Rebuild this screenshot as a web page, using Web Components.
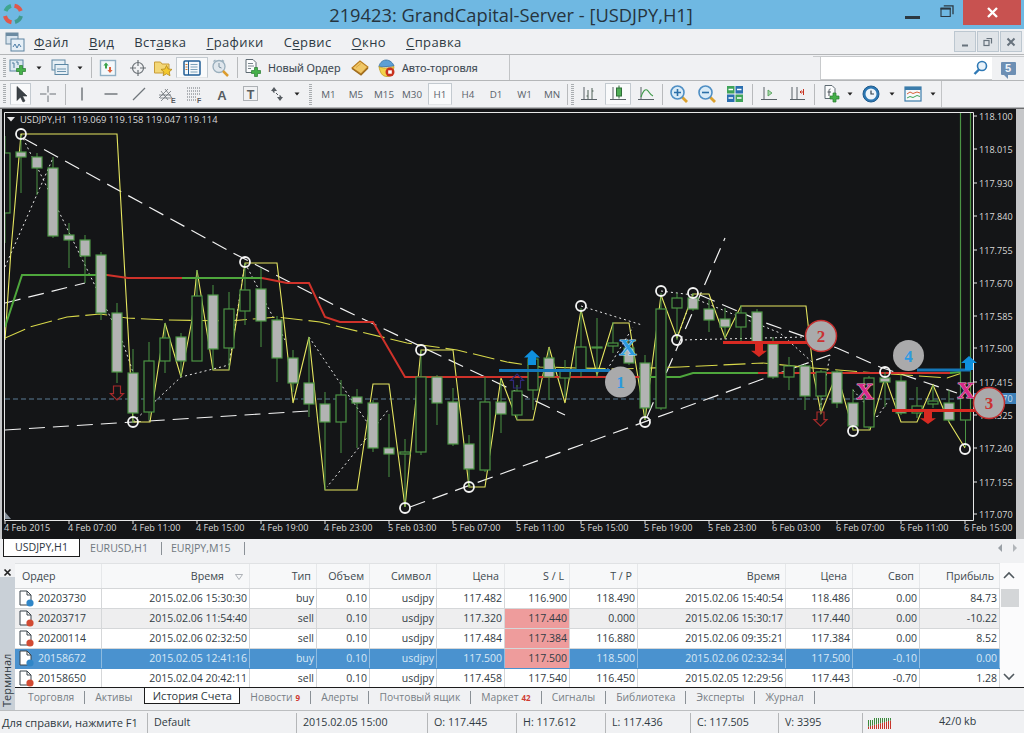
<!DOCTYPE html>
<html lang="ru">
<head>
<meta charset="utf-8">
<title>219423: GrandCapital-Server - [USDJPY,H1]</title>
<style>
  html, body { margin: 0; padding: 0; height: 733px; overflow: hidden; background: #f0f1f3; }
  body { font-family: "Open Sans", "Liberation Sans", sans-serif; color: #333; display: flex; flex-direction: column; }
</style>
</head>
<body>
<mt-titlebar>219423: GrandCapital-Server - [USDJPY,H1]</mt-titlebar>
<mt-menubar></mt-menubar>

<mt-toolbar height="26" end="510" id="tb1">
  <mt-tool w="20" icon="newchart"></mt-tool>
  <mt-tool w="22" icon="drop"></mt-tool>
  <mt-tool w="20" icon="profiles"></mt-tool>
  <mt-tool w="20" icon="drop"></mt-tool>
  <mt-tool w="2" icon="sep"></mt-tool>
  <mt-tool w="32" icon="market"></mt-tool>
  <mt-tool w="28" icon="target"></mt-tool>
  <mt-tool w="22" icon="folderstar"></mt-tool>
  <mt-tool w="36" icon="navigator" active></mt-tool>
  <mt-tool w="20" icon="magclock"></mt-tool>
  <mt-tool w="14" icon="sep"></mt-tool>
  <mt-tool w="18" icon="neworder"></mt-tool>
  <mt-tool w="86" label="Новый Ордер" strong pad="6"></mt-tool>
  <mt-tool w="24" icon="book"></mt-tool>
  <mt-tool w="28" icon="auto"></mt-tool>
  <mt-tool w="84" label="Авто-торговля" strong pad="2"></mt-tool>
</mt-toolbar>

<mt-toolbar height="27" end="942" id="tb2">
  <mt-tool w="25" icon="cursor" active></mt-tool>
  <mt-tool w="30" icon="cross"></mt-tool>
  <mt-tool w="4" icon="sep"></mt-tool>
  <mt-tool w="30" icon="vline"></mt-tool>
  <mt-tool w="28" icon="hline"></mt-tool>
  <mt-tool w="28" icon="diag"></mt-tool>
  <mt-tool w="28" icon="channel"></mt-tool>
  <mt-tool w="26" icon="fib"></mt-tool>
  <mt-tool w="30" icon="letter"></mt-tool>
  <mt-tool w="28" icon="textbox"></mt-tool>
  <mt-tool w="24" icon="arrows"></mt-tool>
  <mt-tool w="16" icon="drop"></mt-tool>
  <mt-tool w="10" icon="grip"></mt-tool>
  <mt-tool w="27" label="M1"></mt-tool>
  <mt-tool w="28" label="M5"></mt-tool>
  <mt-tool w="28" label="M15"></mt-tool>
  <mt-tool w="28" label="M30"></mt-tool>
  <mt-tool w="28" label="H1" active></mt-tool>
  <mt-tool w="28" label="H4"></mt-tool>
  <mt-tool w="28" label="D1"></mt-tool>
  <mt-tool w="29" label="W1"></mt-tool>
  <mt-tool w="26" label="MN"></mt-tool>
  <mt-tool w="4" icon="sep"></mt-tool>
  <mt-tool w="6" icon="grip"></mt-tool>
  <mt-tool w="28" icon="bars"></mt-tool>
  <mt-tool w="30" icon="candle" active></mt-tool>
  <mt-tool w="26" icon="curve"></mt-tool>
  <mt-tool w="6" icon="sep"></mt-tool>
  <mt-tool w="28" icon="zoomin"></mt-tool>
  <mt-tool w="28" icon="zoomout"></mt-tool>
  <mt-tool w="28" icon="tile"></mt-tool>
  <mt-tool w="6" icon="sep"></mt-tool>
  <mt-tool w="28" icon="shift"></mt-tool>
  <mt-tool w="28" icon="autoscroll"></mt-tool>
  <mt-tool w="6" icon="sep"></mt-tool>
  <mt-tool w="29" icon="indicator"></mt-tool>
  <mt-tool w="8" icon="drop"></mt-tool>
  <mt-tool w="34" icon="clock"></mt-tool>
  <mt-tool w="8" icon="drop"></mt-tool>
  <mt-tool w="33" icon="template"></mt-tool>
  <mt-tool w="8" icon="drop"></mt-tool>
</mt-toolbar>

<mt-chart></mt-chart>
<mt-charttabs></mt-charttabs>
<mt-terminal></mt-terminal>
<mt-statusbar></mt-statusbar>

<script>
// toolbar icons, all drawn on a 20x20 box
const dropIcon = '<path d="M7.500 8.500h5l-2.500 3z" fill="#222"/>';
const plus = (x, y) => `<path transform="translate(${x} ${y})" d="M3 0h3v3h3v3H6v3H3V6H0V3h3z" fill="#46b04a" stroke="#2a7c30" stroke-width=".7"/>`;
const axes = '<path d="M5 3v13M2 15.500h16" fill="none" stroke="#5a6268"/>';
const icons = {
  drop: dropIcon,
  newchart: `<rect x="2" y="2" width="13" height="11" fill="#dce8f0" stroke="#5c87a4"/><path d="M4 5h2v5M8 4h2v3" fill="none" stroke="#4d7c9c"/>${plus(8.500, 7.500)}`,
  profiles: `<rect x="2" y="2" width="13" height="10" fill="#e6eff5" stroke="#5c87a4"/><rect x="5" y="6.500" width="13" height="10" fill="#e6eff5" stroke="#5c87a4"/><path d="M7 11h9M7 13.500h9" stroke="#6c94ae"/>`,
  market: `<rect x="2.500" y="2.500" width="15" height="15" fill="#f4f8fb" stroke="#8fafc4" stroke-width="1.400"/><path d="M8 4.500l2.600 3H9v3H7v-3H5.400z" fill="#3aa34a"/><path d="M12 15l-2.600-3H11V9h2v3h1.600z" fill="#e0603a"/>`,
  target: `<circle cx="10" cy="10" r="5.500" fill="none" stroke="#6c7277" stroke-width="1.200"/><path d="M10 2v6M10 12v6M2 10h6M12 10h6" stroke="#6c7277" stroke-width="1.200"/>`,
  folderstar: `<path d="M1.500 4h6l1.500 2h7v9h-14.500z" fill="#f3d777" stroke="#c89c38"/><path d="M13.500 7.500l1.700 3.500 3.800.4-2.800 2.500.8 3.800-3.500-1.900-3.400 1.900.8-3.800-2.900-2.500 3.900-.4z" fill="#f4c92e" stroke="#b58a1c" stroke-width=".8"/>`,
  navigator: `<rect x="2" y="3" width="16" height="14" rx="1" fill="#f4f8fb" stroke="#205d96" stroke-width="1.500"/><path d="M6.500 3v14" stroke="#205d96"/><path d="M8.500 6.500h7M8.500 9h7M8.500 11.500h7M8.500 14h7" stroke="#7ea2ba"/><path d="M3.500 6.500h2M3.500 9h2M3.500 11.500h2" stroke="#d0762a"/>`,
  magclock: `<circle cx="9" cy="8.500" r="6" fill="#dfe6ec" stroke="#9aafbd" stroke-width="1.300"/><path d="M9 5v4l2.500 1" fill="none" stroke="#7a909f"/><path d="M3.500 3.500l2-1.500M14 3.500l-2-1.500" stroke="#9aafbd" stroke-width="1.300"/><path d="M13 13l5 5" stroke="#dc9c2e" stroke-width="2.500"/>`,
  neworder: `<path d="M3 1.500h7l3 3v10h-10z" fill="#fbfcfd" stroke="#5e6a72"/><path d="M5 5.500h5M5 8h6M5 10.500h3" stroke="#7a868e"/>${plus(8.500, 9.500)}`,
  book: `<path d="M10 3l8 6-7 7-9-6z" fill="#f0c766" stroke="#b97d20" stroke-width="1.100"/><path d="M2 10.500l9 6.500 7-7" fill="none" stroke="#9c6a1e" stroke-width="1.200"/><path d="M6 9.500l5-4" stroke="#d9a744"/>`,
  auto: `<path d="M3 9c0-3 3-7 7-7s7 3 8 6z" fill="#5d9fd4" stroke="#356f9e" stroke-width=".8"/><path d="M3 8.500c3 2 9 2 15 0l-1 6c-1 3-3 4-6 4-5 0-7-4-8-10z" fill="#f2d24a" stroke="#c29a20" stroke-width=".8"/><circle cx="14" cy="14" r="4.500" fill="#c8321f"/><rect x="12.200" y="12.300" width="3.600" height="3.400" fill="#fff"/>`,
  cursor: `<path d="M6 2.500v14l3.500-3.500 2.500 5 2-1-2.500-5H16z" fill="#3c4247" stroke="#2a2f33" stroke-width=".6"/>`,
  cross: `<path d="M10 2v6.500M10 11.500V18M2 10h6.500M11.500 10H18" stroke="#6b7176" stroke-width="1"/>`,
  vline: `<path d="M10 3.500v13" stroke="#555c61" stroke-width="1.200"/>`,
  hline: `<path d="M3.500 10h13" stroke="#555c61" stroke-width="1.200"/>`,
  diag: `<path d="M4 16L16 4" stroke="#70767b" stroke-width="1.200"/>`,
  channel: `<path d="M2 14l9-9M4 17l10-10M4 7l7 9M8 5l7 9M2 11h12M3 14h11" stroke="#6b7176" stroke-width=".8" fill="none"/><text x="14" y="18.500" font-size="7" font-weight="700" fill="#55595d" font-family="Liberation Sans">E</text>`,
  fib: `<path d="M3 4h13M3 7h13M3 10h13M3 13h9M3 16h9" stroke="#6b7176" stroke-width="1" stroke-dasharray="1 1"/><text x="13" y="18.500" font-size="7" font-weight="700" fill="#55595d" font-family="Liberation Sans">F</text>`,
  letter: `<text x="10" y="15.500" text-anchor="middle" font-size="13" font-weight="700" fill="#565c61" font-family="Liberation Sans">A</text>`,
  textbox: `<rect x="2.500" y="2.500" width="14" height="14" fill="none" stroke="#6b7176" stroke-dasharray="1 1"/><text x="9.500" y="14.500" text-anchor="middle" font-size="12.500" font-weight="700" fill="#565c61" font-family="Liberation Sans">T</text>`,
  arrows: `<path d="M4 7l3-4 3 4zM10 13l3 4 3-4z" fill="#565c61"/><path d="M6 7l1.500 1.500M12.500 11.500L14 13" stroke="#565c61" stroke-width="1.400"/><path d="M9 9l2 2" stroke="#565c61" stroke-width="1"/>`,
  bars: `${axes}<path d="M9 6v9M7.500 12H9M13 4v11M13 7h1.500" stroke="#4f6056" fill="none"/>`,
  candle: `${axes}<path d="M11 1.500v13" stroke="#2f6d39"/><rect x="8.500" y="4" width="5" height="8" fill="#4fae55" stroke="#2f6d39"/>`,
  curve: `${axes}<path d="M5 13c2-6 4-8 6-7s3 5 6 6" fill="none" stroke="#3f9a4a" stroke-width="1.200"/>`,
  zoomin: `<path d="M13 13l5 5" stroke="#dca22e" stroke-width="2.800"/><circle cx="8.500" cy="8.500" r="6.500" fill="#d9ebf7" stroke="#4f8fc4" stroke-width="1.600"/><path d="M5 8.500h7M8.500 5v7" stroke="#2b6fa8" stroke-width="1.600"/>`,
  zoomout: `<path d="M13 13l5 5" stroke="#dca22e" stroke-width="2.800"/><circle cx="8.500" cy="8.500" r="6.500" fill="#d9ebf7" stroke="#4f8fc4" stroke-width="1.600"/><path d="M5 8.500h7" stroke="#2b6fa8" stroke-width="1.600"/>`,
  tile: `<rect x="2" y="2" width="7.500" height="7.500" fill="#3fa45a"/><rect x="10.500" y="2" width="7.500" height="7.500" fill="#2a6fb0"/><rect x="2" y="10.500" width="7.500" height="7.500" fill="#2a6fb0"/><rect x="10.500" y="10.500" width="7.500" height="7.500" fill="#3fa45a"/><path d="M3.500 5.500h4.500M12 5.500h4.500M3.500 14h4.500M12 14h4.500" stroke="#fff" stroke-width="1.600"/>`,
  shift: `${axes}<path d="M9 6v6l4-3z" fill="#a6d9a8" stroke="#4c9a52" stroke-width=".8"/>`,
  autoscroll: `<path d="M3 15.500h15M5 3v13M10 3v13" fill="none" stroke="#5a6268"/><path d="M16.500 5v6M16 8h-3M14.500 6.500L13 8l1.500 1.500" fill="none" stroke="#c8321f"/>`,
  indicator: `<path d="M3 1.500h7l3 3v10h-10z" fill="#fbfcfd" stroke="#5e6a72"/><path d="M8.500 5c-1.500 0-1.500 1-1.500 2v5M5.500 8h3.500" stroke="#4a5258" fill="none"/>${plus(8, 9)}`,
  clock: `<circle cx="10" cy="10" r="8" fill="#2c78b4" stroke="#1f5b8c"/><circle cx="10" cy="10" r="5.500" fill="#eef5fa"/><path d="M10 6.500V10h3" fill="none" stroke="#33424e" stroke-width="1.200"/>`,
  template: `<rect x="2" y="3" width="16" height="14" fill="#f6f9fb" stroke="#3b7cab" stroke-width="1.200"/><rect x="2" y="3" width="16" height="3" fill="#3b7cab"/><path d="M4 10l3-2 3 1.500L14 8l3 1" fill="none" stroke="#d9623a"/><path d="M4 14l3-1.500 3 1 4-2 3 1" fill="none" stroke="#3fa45a"/>`,
};

class MtTitlebar extends HTMLElement {
  constructor() {
    super();
    this.attachShadow({ mode: "open" });
    this.shadowRoot.innerHTML = `
      <style>
        :host { display: flex; flex: none; height: 29px; background: #6fb8e2; position: relative; color: #26343e; }
        .logo { margin: 3px 0 0 2px; width: 22px; height: 22px; }
        .title { position: absolute; left: 0; right: 2px; top: 1px; text-align: center; font-size: 18.300px; line-height: 28px; white-space: nowrap; }
        .ctrls { margin-left: auto; display: flex; }
        .min { width: 15px; height: 3px; background: #2c3942; margin: 15.500px 20px 0 0; }
        .restore { width: 14px; height: 12px; margin: 5px 9px 0 0; }
        .close { width: 58px; height: 25px; margin-right: 3px; background: #c85250; display: flex; align-items: center; justify-content: center; }
      </style>
      <svg class="logo" viewBox="0 0 22 22" fill="none" stroke-width="4">
        <path d="M3.500 8A8.500 8.500 0 0 1 9 2.800" stroke="#3fa68e"/>
        <path d="M12.500 2.700A8.500 8.500 0 0 1 18.800 8" stroke="#e0584c"/>
        <path d="M19 13a8.500 8.500 0 0 1-6 6" stroke="#3f9a8e"/>
        <path d="M9.500 19.300A8.500 8.500 0 0 1 3 13" stroke="#e0584c"/>
      </svg>
      <div class="title"><slot></slot></div>
      <div class="ctrls">
        <div class="min"></div>
        <svg class="restore" viewBox="0 0 14 13" fill="none" stroke="#2c3942"><rect x="0.500" y="3.500" width="10" height="9" stroke-width="1.200"/><path d="M0 4h11" stroke-width="2"/><path d="M3.500 1h10v9" stroke-width="1.400"/></svg>
        <div class="close"><svg width="11" height="11" viewBox="0 0 11 11"><path d="M1 1l9 9M10 1l-9 9" stroke="#fff" stroke-width="2.400"/></svg></div>
      </div>
    `;
  }
}
customElements.define("mt-titlebar", MtTitlebar);

class MtMenubar extends HTMLElement {
  constructor() {
    super();
    this.attachShadow({ mode: "open" });
    this.shadowRoot.innerHTML = `
      <style>
        :host { display: flex; flex: none; height: 25px; align-items: center; background: #f0f1f3; border-bottom: 1px solid #b4b6b8; font-size: 13px; letter-spacing: .4px; color: #2e3a44; position: relative; }
        .ico { margin: 0 9px 0 5px; width: 20px; height: 20px; }
        nav { display: flex; gap: 20px; }
        u { text-decoration-thickness: 1px; text-underline-offset: 2px; }
        .mdi { position: absolute; right: 2px; top: 2px; display: flex; gap: 1px; }
        .mdi b { width: 22px; height: 21px; box-sizing: border-box; background: #e0e4e8; border: 1px solid #bcc7d0; display: flex; align-items: center; justify-content: center; }
      </style>
      <svg class="ico" viewBox="0 0 20 20"><rect x="1" y="1" width="12" height="11" fill="#d8e4ee" stroke="#6c8ba2"/><rect x="1" y="1" width="12" height="3" fill="#6c8ba2"/><rect x="6" y="7" width="13" height="12" fill="#e6eff6" stroke="#5a82a0"/><path d="M8 15l2-3 2 4 2-4 2 3" fill="none" stroke="#4d7ea8"/></svg>
      <nav>
        <span><u>Ф</u>айл</span><span><u>В</u>ид</span><span>Вст<u>а</u>вка</span><span><u>Г</u>рафики</span><span>С<u>е</u>рвис</span><span><u>О</u>кно</span><span><u>С</u>правка</span>
      </nav>
      <div class="mdi">
        <b><svg width="10" height="10" viewBox="0 0 10 10"><path d="M2 8.500h6" stroke="#67727c" stroke-width="2"/></svg></b>
        <b><svg width="10" height="10" viewBox="0 0 10 10" fill="none" stroke="#67727c" stroke-width="1.200"><rect x="1" y="3.500" width="5" height="5"/><path d="M3.500 1.500h5v5"/></svg></b>
        <b><svg width="10" height="10" viewBox="0 0 10 10"><path d="M1.500 1.500l7 7M8.500 1.500l-7 7" stroke="#67727c" stroke-width="2"/></svg></b>
      </div>
    `;
  }
}
customElements.define("mt-menubar", MtMenubar);

class MtToolbar extends HTMLElement {
  constructor() {
    super();
    this.attachShadow({ mode: "open" });
    this.shadowRoot.innerHTML = `
      <style>
        :host { display: flex; flex: none; background: #f0f1f3; border-bottom: 1px solid #b4b6b8; position: relative; box-sizing: border-box; }
        .grip { width: 3px; margin: 3px 2px 3px 3px; background: repeating-linear-gradient(#a9adb0 0 1px, transparent 1px 2px); }
        .strip { display: flex; box-sizing: border-box; border-right: 1px solid #c2c4c6; }
        .search { position: absolute; right: 0; top: 1px; width: 211px; height: 24px; display: flex; box-sizing: border-box; border-top: 1px solid #c8cacc; }
        .search .field { flex: 1; margin-left: 7px; background: #fff; border-left: 1px solid #c8cacc; border-bottom: 1px solid #c8cacc; display: flex; align-items: center; justify-content: flex-end; padding-right: 3px; }
        .search .chat { width: 32px; display: flex; align-items: center; justify-content: center; }
        .chat span { font: 700 11px "Liberation Sans", sans-serif; color: #f2f6fa; width: 15px; height: 13px; line-height: 13px; text-align: center; background: #6d8fb4; border-radius: 1px; position: relative; }
        .chat span::after { content: ""; position: absolute; left: 3px; top: 13px; border: 2px solid #6d8fb4; border-bottom-color: transparent; border-left-color: transparent; }
      </style>
      <div class="grip"></div>
      <div class="strip"><slot></slot></div>
    `;
  }
  connectedCallback() {
    this.style.height = this.getAttribute("height") + "px";
    this.shadowRoot.querySelector(".strip").style.width = (this.getAttribute("end") - 8) + "px";
    if (this.id === "tb1") {
      const search = document.createElement("div");
      search.className = "search";
      search.innerHTML = `<div class="field"><svg width="18" height="18" viewBox="0 0 18 18"><circle cx="11" cy="7" r="4.500" fill="#e8f2fa" stroke="#2f79b5" stroke-width="1.600"/><path d="M8 10.500l-4.500 4.500" stroke="#2f79b5" stroke-width="2.400"/></svg></div><div class="chat"><span>5</span></div>`;
      this.shadowRoot.appendChild(search);
    }
  }
}
customElements.define("mt-toolbar", MtToolbar);

class MtTool extends HTMLElement {
  constructor() {
    super();
    this.attachShadow({ mode: "open" });
  }
  connectedCallback() {
    const icon = this.getAttribute("icon");
    const label = this.getAttribute("label");
    this.style.width = this.getAttribute("w") + "px";
    if (this.hasAttribute("pad")) this.style.paddingLeft = this.getAttribute("pad") + "px";
    let inner = "";
    if (icon === "sep") inner = '<i class="sep"></i>';
    else if (icon === "grip") inner = '<i class="grip"></i>';
    else if (icon) inner = `<svg width="20" height="20" viewBox="0 0 20 20">${icons[icon]}</svg>`;
    else inner = `<span>${label}</span>`;
    this.shadowRoot.innerHTML = `
      <style>
        :host { display: flex; flex: none; align-items: center; justify-content: center; box-sizing: border-box; overflow: visible; position: relative; font-size: 9.800px; color: #59626a; white-space: nowrap; }
        :host([strong]) { justify-content: flex-start; font-size: 10.800px; font-weight: 500; -webkit-text-stroke: .15px #3a4650; color: #3a4650; }
        :host([active])::before { content: ""; position: absolute; inset: 2px 2px 2px 2px; background: #f9fafb; border: 1px solid #c3cad0; border-bottom-color: #e4e6e8; z-index: 0; }
        svg, span { position: relative; z-index: 1; flex: none; }
        .sep { width: 1px; height: 21px; background: #b8babc; }
        .grip { width: 3px; height: 21px; background: repeating-linear-gradient(#a9adb0 0 1px, transparent 1px 2px); }
      </style>
      ${inner}
    `;
  }
}
customElements.define("mt-tool", MtTool);

// [x, body top, body bottom, wick top, wick bottom, filled]
const candles = [
  [5,153,213,136,243,0],[21,152,157,135,193,1],[37,157,168,153,195,1],[53,168,236,157,238,1],[69,235,240,223,268,1],
  [85,240,256,235,283,1],[101,255,313,252,320,1],[117,313,372,303,383,1],[133,373,413,349,423,1],[149,361,412,342,420,0],
  [165,338,361,323,373,0],[181,337,361,333,377,1],[197,296,361,270,361,0],[213,295,349,285,370,1],[229,309,348,292,370,0],
  [245,290,311,263,325,0],[261,289,321,268,347,1],[277,320,358,316,382,1],[293,358,383,350,392,1],[309,383,404,337,417,1],
  [325,404,422,392,490,1],[341,395,422,380,453,0],[357,397,403,389,448,1],[373,403,448,400,452,1],[389,448,454,414,477,1],
  [405,452,454,439,507,0],[421,377,452,350,455,0],[437,377,403,375,425,1],[453,402,444,388,446,1],[469,444,469,435,487,1],
  [485,402,470,377,472,0],[501,402,414,380,433,1],[517,391,415,385,420,0],[533,359,390,355,410,0],[549,358,377,348,400,1],
  [565,370,378,360,397,0],[581,347,370,308,377,0],[597,347,348,318,377,0],[613,343,346,322,353,0],[629,348,363,340,365,1],
  [645,363,408,355,420,1],[661,309,408,293,410,0],[677,298,308,293,340,0],[693,298,309,293,311,1],[709,309,320,300,332,1],
  [725,319,327,308,338,1],[741,313,327,305,342,0],[757,312,342,309,344,1],[773,344,377,337,379,1],[789,366,377,357,390,0],
  [805,366,396,364,410,1],[821,372,396,370,413,0],[837,372,403,370,408,1],[853,403,426,389,430,1],[869,378,427,376,429,0],
  [885,378,382,372,407,1],[901,381,413,375,415,1],[917,406,413,387,418,0],[933,401,404,385,408,0],[949,403,420,390,422,1],
  [965.500,100,420,420,447,0],
];

const zigzag = [[5,340],[11,250],[21,134],[117,134],[128,330],[133,422],[150,422],[165,323],[181,377],[192,320],[197,270],[213,370],[229,370],[245,263],[277,263],[283,313],[293,403],[309,337],[325,490],[357,490],[373,384],[389,384],[405,507],[421,350],[453,350],[469,487],[485,487],[501,378],[517,420],[533,420],[549,347],[565,403],[581,310],[597,375],[613,323],[629,323],[645,420],[661,295],[677,338],[693,294],[709,294],[725,338],[741,306],[806,306],[814,377],[821,413],[837,373],[853,430],[870,430],[885,377],[901,422],[917,422],[933,385],[949,422],[965,448]];
const slowMa = [[5,338],[30,327],[67,317],[100,314],[127,318],[167,320],[230,321],[277,317],[320,322],[340,327],[407,343],[457,350],[507,362],[540,367],[620,369],[680,367],[763,363],[813,368],[863,372],[947,378],[965,372]];

const sellLine = (pts) => pts.map((p, i) => (i ? "L" : "M") + p[0] + " " + p[1]).join("");
const marks = [[21,134],[245,262],[133,422],[421,350],[469,487],[405,508],[581,306],[645,422],[661,291],[677,340],[693,293],[853,431],[885,372],[965,449]];
const prices = [["118.100",116],["118.015",149],["117.930",183],["117.840",216],["117.755",250],["117.670",283],["117.585",316],["117.500",348],["117.415",382],["117.325",415],["117.240",448],["117.155",482],["117.070",514]];
const times = ["4 Feb 2015","4 Feb 07:00","4 Feb 11:00","4 Feb 15:00","4 Feb 19:00","4 Feb 23:00","5 Feb 03:00","5 Feb 07:00","5 Feb 11:00","5 Feb 15:00","5 Feb 19:00","5 Feb 23:00","6 Feb 03:00","6 Feb 07:00","6 Feb 11:00","6 Feb 15:00"];

const dashes = [
  [[23,138],[233,253],[340,308],[565,415]],
  [[700,295],[763,322],[837,348],[880,367],[957,393]],
  [[410,507],[680,409],[760,380],[830,355]],
  [[647,417],[725,238]],
  [[5,430],[117,423],[308,411]],
  [[5,303],[85,283]],
];
const dots = [
  [[21,134],[123,343],[133,372]],[[5,267],[53,158]],[[133,422],[181,377],[229,365],[245,263]],
  [[245,263],[285,340]],[[309,337],[340,383],[367,422]],[[365,440],[327,487]],[[365,440],[388,410]],
  [[581,306],[642,325]],[[607,370],[633,327]],[[661,291],[693,295]],[[677,338],[693,295]],
  [[680,340],[805,337]],[[693,298],[780,333],[812,362]],[[820,410],[830,355]],[[853,390],[877,417]],[[877,417],[887,403]],
];

const solidArrow = (x, top, bottom, up, color) => {
  const h = bottom - top;
  return up
    ? `<path d="M${x} ${top}l8 ${h * 0.5}h-4v${h * 0.5}h-8v${-h * 0.5}h-4z" fill="${color}"/>`
    : `<path d="M${x} ${bottom}l8 ${-h * 0.45}h-4v${-h * 0.55}h-8v${h * 0.55}h-4z" fill="${color}"/>`;
};
const hollowArrow = (x, top, bottom, up, color) => {
  const h = bottom - top;
  return up
    ? `<path d="M${x} ${top}l6.500 ${h * 0.45}h-3v${h * 0.55}h-7v${-h * 0.55}h-3z" fill="none" stroke="${color}" stroke-width="1.200"/>`
    : `<path d="M${x} ${bottom}l6.500 ${-h * 0.45}h-3v${-h * 0.55}h-7v${h * 0.55}h-3z" fill="none" stroke="${color}" stroke-width="1.200"/>`;
};
const badge = (x, y, n, color, ring) =>
  `<circle cx="${x}" cy="${y}" r="15.500" fill="#aaaaab" ${ring ? `stroke="${ring}" stroke-width="1.500"` : ""}/><text class="num" x="${x}" y="${y + 6}" style="fill:${color}">${n}</text>`;
const cross = (x, y, fill, halo) =>
  `<text class="xmark" x="${x}" y="${y}" style="fill:${fill};stroke:${halo}">X</text>`;

class MtChart extends HTMLElement {
  constructor() {
    super();
    this.attachShadow({ mode: "open" });
    const candleSvg = candles.map(([x, t, b, wt, wb, f]) =>
      `<path d="M${x} ${wt}V${wb}" stroke="#4b9444"/><rect x="${x - 5}" y="${t}" width="10" height="${b - t}" fill="${f ? "#b2b3b3" : "#141517"}" stroke="#4b9444" stroke-width="1.200"/>`
    ).join("");
    this.shadowRoot.innerHTML = `
      <style>
        :host { display: block; flex: none; height: 431px; background: #c6c7c9; border-top: 1px solid #6d6e70; box-sizing: border-box; padding-left: 2px; }
        svg { display: block; width: 1014px; height: 430px; background: #141517; }
        text { font-family: "Open Sans", "Liberation Sans", sans-serif; font-size: 9.100px; fill: #d8d8d8; }
        .legend { font-size: 9.400px; }
        .num { font-family: "Liberation Serif", serif; font-weight: 700; font-size: 17px; text-anchor: middle; }
        .xmark { font-family: "Liberation Serif", serif; font-weight: 700; font-size: 24px; text-anchor: middle; stroke-width: 1px; paint-order: stroke; }
      </style>
      <svg viewBox="2 109 1014 430">
        <defs><clipPath id="plot"><rect x="5" y="113" width="968" height="407"/></clipPath></defs>
        <path d="M4.500 112.500H973.500V520.500H4.500z" fill="none" stroke="#e8e8e8"/>
        <path d="M5 519v-7l6 7z" fill="#8b95a0"/>
        ${prices.map(([, y]) => `<path d="M974 ${y}h3" stroke="#e8e8e8"/>`).join("")}
        ${times.map((_, i) => `<path d="M${5 + i * 64} 521v3" stroke="#e8e8e8"/>`).join("")}
        <g clip-path="url(#plot)">
          <path d="M5 399H973" stroke="#5b7c96" stroke-dasharray="5 3" fill="none"/>
          ${dashes.map((d) => `<path d="${sellLine(d)}" fill="none" stroke="#f2f2f2" stroke-width="1.200" stroke-dasharray="16 8"/>`).join("")}
          ${dots.map((d) => `<path d="${sellLine(d)}" fill="none" stroke="#e8e8e8" stroke-dasharray="2 3"/>`).join("")}
          <path d="${sellLine(slowMa)}" fill="none" stroke="#d8d84a" stroke-width="1.100" stroke-dasharray="22 6"/>
          <path d="${sellLine(zigzag)}" fill="none" stroke="#e6e660" stroke-width="1.100"/>
          <path d="${sellLine([[5,327],[22,275],[107,275]])}" fill="none" stroke="#4ea63c" stroke-width="2"/>
          <path d="${sellLine([[107,275],[128,278],[182,278]])}" fill="none" stroke="#cf322a" stroke-width="2"/>
          <path d="${sellLine([[182,278],[262,278]])}" fill="none" stroke="#4ea63c" stroke-width="2"/>
          <path d="${sellLine([[262,278],[287,283],[309,283],[325,317],[340,322],[373,322],[405,377],[640,377]])}" fill="none" stroke="#cf322a" stroke-width="2"/>
          <path d="${sellLine([[640,377],[680,377],[693,373],[758,373]])}" fill="none" stroke="#4ea63c" stroke-width="2"/>
          <path d="${sellLine([[758,373],[950,373]])}" fill="none" stroke="#cf322a" stroke-width="2"/>
          <path d="${sellLine([[950,373],[960,372]])}" fill="none" stroke="#4ea63c" stroke-width="2"/>
          ${candleSvg}
        </g>
        ${marks.map(([x, y]) => `<circle cx="${x}" cy="${y}" r="5" fill="none" stroke="#f4f4f4" stroke-width="1.800"/>`).join("")}
        ${hollowArrow(117, 386, 400, false, "#a52a2a")}
        ${hollowArrow(517, 374, 388, true, "#2e2878")}
        ${hollowArrow(820.500, 412, 426, false, "#a52a2a")}
        <path d="M499 370.500H610" stroke="#1477b8" stroke-width="3"/>
        ${solidArrow(532, 350, 365, true, "#0f90dd")}
        <path d="M723 342.500H807" stroke="#d82a22" stroke-width="3"/>
        ${solidArrow(759, 343, 357, false, "#d82a22")}
        <path d="M892 410.500H975" stroke="#d82a22" stroke-width="3"/>
        ${solidArrow(928, 411, 424, false, "#d82a22")}
        <path d="M917 370H971" stroke="#1477b8" stroke-width="3"/>
        ${solidArrow(969, 356, 370, true, "#0f90dd")}
        ${cross(628, 355, "#2b9be0", "#bfe0f2")}
        ${cross(865, 399, "#d8288a", "#e7b4cc")}
        ${cross(966, 398, "#d8288a", "#e7b4cc")}
        ${prices.map(([p, y]) => `<text x="979" y="${y + 3.500}">${p}</text>`).join("")}
        <rect x="974" y="393" width="42" height="11" fill="#3d80b8"/>
        <text x="979" y="402" style="fill:#c8dcec">117.370</text>
        ${times.map((t, i) => `<text x="${4 + i * 64}" y="531">${t}</text>`).join("")}
        <path d="M7 117h8l-4 4.500z" fill="#e8e8e8"/>
        <text class="legend" x="20" y="123" xml:space="preserve">USDJPY,H1  119.069 119.158 119.047 119.114</text>
        ${badge(620.500, 382, 1, "#2c9ae0")}
        ${badge(821, 336, 2, "#c93232", "#c62f2f")}
        ${badge(989, 403, 3, "#c93232", "#c62f2f")}
        ${badge(908.500, 355.500, 4, "#2c9ae0")}
      </svg>
    `;
  }
}
customElements.define("mt-chart", MtChart);

class MtCharttabs extends HTMLElement {
  constructor() {
    super();
    this.attachShadow({ mode: "open" });
    this.shadowRoot.innerHTML = `
      <style>
        :host { display: flex; flex: none; height: 20px; background: #f0f1f3; font-size: 10.600px; color: #6f7880; align-items: flex-start; position: relative; }
        .active { margin-left: 3px; width: 77px; height: 18px; box-sizing: border-box; background: #fff; border: 1px solid #1c1c1c; border-top: 0; color: #2c3640; text-align: center; line-height: 17px; }
        .tab { line-height: 18px; padding-left: 10px; }
        .sep { width: 1px; height: 13px; background: #8a9096; margin: 3px 0 0 13px; }
        .arrows { position: absolute; right: 7px; top: 5px; display: flex; gap: 11px; }
        .arrows i { width: 0; height: 0; border: 4px solid transparent; }
        .l { border-right-color: #9aa0a6 !important; border-left: 0 !important; }
        .r { border-left-color: #b2b6ba !important; border-right: 0 !important; }
      </style>
      <div class="active">USDJPY,H1</div>
      <div class="tab">EURUSD,H1</div><div class="sep"></div>
      <div class="tab" style="padding-left:9px">EURJPY,M15</div><div class="sep"></div>
      <div class="arrows"><i class="l"></i><i class="r"></i></div>
    `;
  }
}
customElements.define("mt-charttabs", MtCharttabs);

const orders = [
  ["buy","20203730","2015.02.06 15:30:30","buy","0.10","usdjpy","117.482","116.900","118.490","2015.02.06 15:40:54","118.486","0.00","84.73",""],
  ["sell","20203717","2015.02.06 11:54:40","sell","0.10","usdjpy","117.320","117.440","0.000","2015.02.06 15:30:17","117.440","0.00","-10.22","alt"],
  ["sell","20200114","2015.02.06 02:32:50","sell","0.10","usdjpy","117.484","117.384","116.880","2015.02.06 09:35:21","117.384","0.00","8.52",""],
  ["buy","20158672","2015.02.05 12:41:16","buy","0.10","usdjpy","117.500","117.500","118.500","2015.02.06 02:32:34","117.500","-0.10","0.00","sel"],
  ["sell","20158650","2015.02.04 20:42:11","sell","0.10","usdjpy","117.458","117.540","116.450","2015.02.05 12:29:56","117.443","-0.70","1.28",""],
];
const heads = ["Ордер","Время","Тип","Объем","Символ","Цена","S / L","T / P","Время","Цена","Своп","Прибыль"];

class MtOrderTable extends HTMLElement {
  constructor() {
    super();
    this.attachShadow({ mode: "open" });
    const docIcon = (kind) => `<svg width="17" height="17" viewBox="0 0 17 17"><path d="M2 1h7l4 4v10H2z" fill="#fff" stroke="#38424a"/><path d="M9 1v4h4" fill="none" stroke="#38424a"/><circle cx="12" cy="13" r="3.600" fill="${kind === "buy" ? "#2f86c8" : "#d24a32"}"/></svg>`;
    const rows = orders.map((o, r) => {
      const cells = o.slice(1, 13).map((v, i) => {
        const pink = i === 6 && r >= 1 && r <= 3 ? " pink" : "";
        if (i === 0) return `<div class="c first">${docIcon(o[0])}<span>${v}</span></div>`;
        return `<div class="c${pink}">${v}</div>`;
      }).join("");
      return `<div class="row ${o[13]}">${cells}</div>`;
    }).join("");
    this.shadowRoot.innerHTML = `
      <style>
        :host { display: block; font-size: 10.500px; color: #333d45; overflow: hidden; height: 124px; --cols: 87px 148px 67px 53px 67px 68px 65px 68px 148px 67px 67px 80px; }
        .row { display: grid; grid-template-columns: var(--cols); height: 20px; line-height: 19px; box-sizing: border-box; border-bottom: 1px solid #d5d7d9; background: #fff; }
        .head { height: 26px; line-height: 25px; background: #f7f8f9; color: #40494f; font-size: 10.700px; border-bottom: 1px solid #d5d7d9; border-top: 1px solid #e0e2e4; }
        .c { text-align: right; padding-right: 2px; border-right: 1px solid #d5d7d9; white-space: nowrap; overflow: hidden; box-sizing: border-box; }
        .head .c { padding-right: 5px; border-right-color: #e6e8ea; }
        .head .c:first-child { text-align: left; padding-left: 7px; }
        .first { display: flex; align-items: center; gap: 3px; text-align: left; padding-left: 3px; }
        .alt { background: #eeeeef; }
        .sel { background: #4a92cf; color: #d9e9f6; border-color: #4a92cf; }
        .sel .c { border-right-color: #8dbbe0; }
        .pink { background: #ee9c9c; color: #333d45; }
        .sort { display: inline-block; width: 9px; margin-left: 10px; margin-right: 1px; color: #8b9197; }
      </style>
      <div class="row head">${heads.map((h, i) => `<div class="c">${h}${i === 1 ? '<span class="sort"><svg width="8" height="6" viewBox="0 0 8 6"><path d="M.5.500h7L4 5.500z" fill="none" stroke="#9aa0a6" stroke-width=".8"/></svg></span>' : ""}</div>`).join("")}</div>
      ${rows}
    `;
  }
}
customElements.define("mt-order-table", MtOrderTable);

class MtTerminal extends HTMLElement {
  constructor() {
    super();
    this.attachShadow({ mode: "open" });
    this.shadowRoot.innerHTML = `
      <style>
        :host { display: grid; flex: none; height: 151px; grid-template-columns: 15px 1fr 24px; grid-template-rows: 4px 124px 23px; background: #f0f1f3; }
        .side { grid-row: 1 / 4; display: flex; flex-direction: column; }
        .close { height: 18px; display: flex; justify-content: center; align-items: flex-end; }
        .vtab { flex: 1; background: #c9d0d7; color: #2f3a42; font-size: 11px; writing-mode: vertical-rl; transform: rotate(180deg); padding-top: 3px; line-height: 13px; box-sizing: border-box; text-align: left; }
        .table { grid-column: 2; grid-row: 2; }
        .scroll { grid-column: 3; grid-row: 2; position: relative; background: #fbfbfc; }
        .thumb { position: absolute; left: 1px; top: 26px; width: 18px; height: 18px; background: #d4d6d8; }
        .scroll svg { position: absolute; left: 2px; }
        .tabs { grid-column: 2 / 4; grid-row: 3; display: flex; border-top: 1px solid #1c1c1c; font-size: 10.300px; color: #787f86; line-height: 16px; padding-left: 13px; }
        .tabs span { flex: none; padding-top: 1px; }
        .tabs i { flex: none; width: 1px; height: 13px; background: #8a9096; margin: 3px 10px 0 10px; }
        .tabs b { color: #cf3a32; font-size: 8px; margin-left: 3px; font-weight: 700; }
        .tabs .on { background: #fff; color: #2e3840; font-size: 11px; border: 1px solid #1c1c1c; border-top: 0; height: 16px; box-sizing: border-box; width: 96px; text-align: center; padding: 0; margin: 0 10px 0 12px; line-height: 15px; }
      </style>
      <div class="side">
        <div class="close"><svg width="9" height="9" viewBox="0 0 9 9"><path d="M1.500 1.500l6 6M7.500 1.500l-6 6" stroke="#222" stroke-width="1.700"/></svg></div>
        <div class="vtab">Терминал</div>
      </div>
      <div class="table"><mt-order-table></mt-order-table></div>
      <div class="scroll">
        <svg style="top:8px" width="16" height="9" viewBox="0 0 16 9"><path d="M2 7l5-5 5 5" fill="none" stroke="#50585e" stroke-width="1.600"/></svg>
        <div class="thumb"></div>
        <svg style="top:109px" width="16" height="9" viewBox="0 0 16 9"><path d="M2 2l5 5 5-5" fill="none" stroke="#50585e" stroke-width="1.600"/></svg>
      </div>
      <div class="tabs">
        <span>Торговля</span><i></i><span>Активы</span><span class="on">История Счета</span><span>Новости<b>9</b></span><i></i><span>Алерты</span><i></i><span>Почтовый ящик</span><i></i><span>Маркет<b>42</b></span><i></i><span>Сигналы</span><i></i><span>Библиотека</span><i></i><span>Эксперты</span><i></i><span>Журнал</span><i></i>
      </div>
    `;
  }
}
customElements.define("mt-terminal", MtTerminal);

class MtStatusbar extends HTMLElement {
  constructor() {
    super();
    this.attachShadow({ mode: "open" });
    let bars = "";
    for (let i = 0; i < 12; i++) {
      const split = 8.500 - i * 0.550;
      bars += `<path d="M${i * 2 + .5} 11V${split}" stroke="#c8352a"/><path d="M${i * 2 + .5} ${split}V${i < 3 ? 2 : 0}" stroke="#3c8a3c"/>`;
    }
    const parts = [[148,"Для справки, нажмите F1"],[149,"Default"],[131,"2015.02.05 15:00"],[89,"O: 117.445"],[89,"H: 117.612"],[85,"L: 117.436"],[88,"C: 117.505"],[84,"V: 3395"]];
    this.shadowRoot.innerHTML = `
      <style>
        :host { display: flex; flex: none; height: 23px; background: #f0f1f3; border-top: 1px solid #bcbec0; box-sizing: border-box; font-size: 10.700px; color: #2f3a42; line-height: 26px; }
        .p { flex: none; box-sizing: border-box; padding-left: 6px; border-right: 1px solid #b4b6b8; white-space: nowrap; overflow: hidden; margin: 2px 0 0; height: 20px; line-height: 19px; }
        .p.help { padding-left: 2px; font-size: 11.100px; }
        .conn { flex: none; display: flex; align-items: center; padding-left: 5px; width: 76px; box-sizing: border-box; height: 20px; margin-top: 2px; }
        .kb { line-height: 21px; }
      </style>
      ${parts.map(([w, t], i) => `<div class="p${i ? "" : " help"}" style="width:${w}px">${t}</div>`).join("")}
      <div class="conn"><svg width="24" height="11" viewBox="0 0 24 11">${bars}</svg></div>
      <div class="kb">42/0 kb</div>
    `;
  }
}
customElements.define("mt-statusbar", MtStatusbar);
</script>
</body>
</html>
